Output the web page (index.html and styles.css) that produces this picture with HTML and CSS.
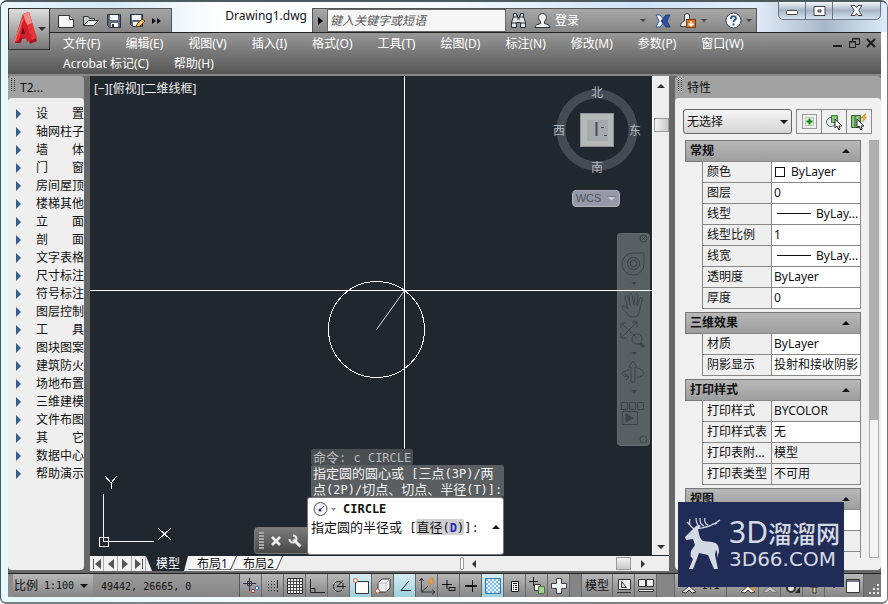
FILE: index.html
```html
<!DOCTYPE html>
<html lang="zh-CN">
<head>
<meta charset="utf-8">
<title>Drawing1.dwg</title>
<link rel="stylesheet" href="styles.css">
</head>
<body>
<div class="window">
  <header class="titlebar">
    <div class="quick">
      <button aria-label="新建"><svg width="18" height="16" viewBox="0 0 18 16"><path d="M1.500 2.500h11l4 4v8h-15z" fill="#f4f5f7" stroke="#333"/><path d="M12.500 2.500v4h4" fill="#ccd" stroke="#333"/></svg></button>
      <button aria-label="打开"><svg width="18" height="16" viewBox="0 0 18 16"><path d="M1.500 12V3.500h5l1 2h5v2" fill="#c9ccd0" stroke="#333"/><path d="M1.500 12.500l5-5h10l-5 5z" fill="#eef0f2" stroke="#333"/></svg></button>
      <button aria-label="保存"><svg width="16" height="16" viewBox="0 0 16 16"><path d="M1.500 1.500h13v13h-11l-2-2z" fill="#5e6a7c" stroke="#27303c"/><path d="M4 2h8v5H4zM5 10h7v4H5z" fill="#f5f6f8"/><path d="M6 11h2v3H6z" fill="#333"/></svg></button>
      <button aria-label="另存为"><svg width="17" height="16" viewBox="0 0 17 16"><path d="M1.500 1.500h12v12h-10l-2-2z" fill="#5e6a7c" stroke="#27303c"/><path d="M3 2h9v5H3zM4 9h6v4H4z" fill="#f5f6f8"/><path d="M7 14l1-3 5-5 3 2-5 5z" fill="#f5c56a" stroke="#6b3c0c"/></svg></button>
      <button aria-label="更多"><svg width="9" height="8" viewBox="0 0 9 8"><path d="M0 1l4 3-4 3zM5 1l4 3-4 3z" fill="#111"/></svg></button>
    </div>
    <h1 class="title">Drawing1.dwg</h1>
    <div class="infocenter">
      <button class="expand" aria-label="展开"><svg width="5" height="8" viewBox="0 0 5 8"><path d="M0 0l5 4-5 4z" fill="#000"/></svg></button>
      <input class="search" type="text" aria-label="搜索" placeholder="键入关键字或短语">
      <button class="find" aria-label="查找"><svg width="17" height="17" viewBox="0 0 17 17"><path d="M3.500 1.500h3v2h1v2h2v-2h1v-2h3v3l2 6v5h-5v-5h-4v5h-5v-5l2-6z" fill="#dfe3e8" stroke="#262b31"/><path d="M1 11h5M11 11h5M7 7h3M3 5h4M10 5h4" stroke="#262b31"/></svg></button>
      <button class="login"><svg width="17" height="17" viewBox="0 0 17 17"><path d="M1 15.500c0-3 3-3 5.500-4v-2C3 6 4.500 1.500 8.500 1.500S14 6 10.500 9.500v2c2.500 1 5.500 1 5.500 4z" fill="#eef0f2" stroke="#2c3035"/></svg>登录</button>
      <span class="caret caret-login"></span>
      <button aria-label="Exchange"><svg width="16" height="14" viewBox="0 0 16 14"><path d="M1 1h4l5 6-5 6H1l3-6z" fill="#eef3fa" stroke="#3a5a92"/><path d="M15 1h-4L6 7l5 6h4l-3-6z" fill="#2c519b" stroke="#24427f"/></svg></button>
      <button class="update" aria-label="更新"><svg width="18" height="17" viewBox="0 0 18 17"><path d="M1.500 14.500c0-3 2-5 4-6V4a2.500 2.500 0 0 1 5 0v4l5 5v1.500z" fill="#e9edf2" stroke="#3b4148"/><rect x="7.500" y="7.500" width="9" height="8" fill="#d87820" stroke="#7c3808"/><path d="M12 9v5M9.500 11.500L12 14l2.500-2.500" stroke="#fff" fill="none" stroke-width="1.500"/></svg></button>
      <span class="caret"></span>
      <button class="help" aria-label="帮助"><svg width="17" height="17" viewBox="0 0 17 17"><circle cx="8.500" cy="8.500" r="7.500" fill="#f6f9fd" stroke="#38404c"/><path d="M6 7c0-4 5-3.500 5-.7C11 8 8.500 8 8.500 10M8.500 11.500v2" fill="none" stroke="#2d509c" stroke-width="1.900"/></svg></button>
      <span class="caret"></span>
    </div>
    <div class="winctl">
      <button aria-label="最小化"><svg width="13" height="6" viewBox="0 0 13 6"><rect x=".5" y=".5" width="11" height="4" rx="1" fill="#fff" stroke="#444"/></svg></button>
      <button aria-label="最大化"><svg width="13" height="10" viewBox="0 0 13 10"><path d="M1 .5h11v9H1zM5 4h3v2H5z" fill="#fff" fill-rule="evenodd" stroke="#444"/></svg></button>
      <button class="close" aria-label="关闭"><svg width="13" height="11" viewBox="0 0 13 11"><path d="M1 .5h4l1.500 2 1.500-2h4L8.700 5.500l3.300 5H8l-1.500-2-1.500 2H1l3.300-5z" fill="#fff" stroke="#444"/></svg></button>
    </div>
  </header>
  <button class="appbtn" aria-label="应用程序菜单"><svg width="40" height="40" viewBox="0 0 40 40"><path d="M5 34L14 5l6-2 8 29-7 3-2-6-6 1-1 4z" fill="#a81620"/><path d="M5 34L14 5l6-2 8 26-6 2-7-20-5 20z" fill="#e4363a"/><path d="M14 5l6-2 3 11-5 2z" fill="#f48c88"/><path d="M14 19l4 1 2 7h-8z" fill="#5f0c12"/><path d="M13 14l4-1 6 18-5 2zM11 25h11l1 3-12 1z" fill="#cf1f28"/><path d="M5 34L14 10" stroke="#f77" fill="none"/><path d="M29 18h8l-4 4z" fill="#333"/></svg></button>
  <nav class="menubar">
    <div class="menus">
      <button>文件(F)</button><button>编辑(E)</button><button>视图(V)</button><button>插入(I)</button><button>格式(O)</button><button>工具(T)</button><button>绘图(D)</button><button>标注(N)</button><button>修改(M)</button><button>参数(P)</button><button>窗口(W)</button><button>Acrobat 标记(C)</button><button>帮助(H)</button>
    </div>
    <div class="mdi">
      <button aria-label="最小化图形"><svg width="11" height="12" viewBox="0 0 11 12"><path d="M1 8h9v2H1z" fill="#1c1c1c"/></svg></button>
      <button aria-label="还原图形"><svg width="13" height="12" viewBox="0 0 13 12"><path d="M4.500 4V1.500h7v6H8M4 2h8M1.500 4.500h6v6h-6zM1 5h7" fill="none" stroke="#1c1c1c"/></svg></button>
      <button aria-label="关闭图形"><svg width="10" height="12" viewBox="0 0 10 12"><path d="M1 2l8 8M9 2l-8 8" stroke="#1c1c1c" stroke-width="2"/></svg></button>
    </div>
  </nav>

  <main class="main">
    <aside class="palette">
      <h2 class="palhead"><span class="grip"></span>T2...</h2>
      <ul class="tools">
        <li>设　　置</li><li>轴网柱子</li><li>墙　　体</li><li>门　　窗</li><li>房间屋顶</li><li>楼梯其他</li><li>立　　面</li><li>剖　　面</li><li>文字表格</li><li>尺寸标注</li><li>符号标注</li><li>图层控制</li><li>工　　具</li><li>图块图案</li><li>建筑防火</li><li>场地布置</li><li>三维建模</li><li>文件布图</li><li>其　　它</li><li>数据中心</li><li>帮助演示</li>
      </ul>
    </aside>

    <section class="drawing">
      <div class="canvas">
        <p class="viewlabel">[−][俯视][二维线框]</p>
        <svg class="model" width="100%" height="100%">
          <g stroke="#fff" fill="none" shape-rendering="crispEdges">
            <path d="M314.500 0V2000M0 214.500H3000"/>
            <circle cx="286.500" cy="253.500" r="48"/>
          </g>
          <path d="M286.500 253.500l28-39" stroke="#ddd"/>
        </svg>
        <svg class="ucs" width="80" height="76" viewBox="0 0 80 76" fill="none" stroke="#f4f4f4" shape-rendering="crispEdges"><path d="M9.500 67V20M9 67.500h51M5.500 63.500h9v9h-9zM11 2l6 7 6-7M17.500 9v6M64 54l13 12M77 54L64 66"/></svg>
        <div class="compass">
          <svg width="82" height="82" viewBox="0 0 82 82"><circle cx="41" cy="41" r="36" fill="none" stroke="#444b55" stroke-width="9"/><rect x="24.500" y="24.500" width="33" height="33" fill="#b4b8b9" stroke="#8e9294"/><rect x="31" y="31" width="21" height="21" fill="#a5aaad"/><path d="M40.500 33v14" stroke="#454b52" stroke-width="2"/><path d="M45 38.500h3M48 46.500h3" stroke="#454b52"/></svg>
          <span class="n">北</span><span class="w">西</span><span class="e">东</span><span class="s">南</span>
        </div>
        <button class="wcs">WCS<svg width="9" height="5" viewBox="0 0 9 5"><path d="M0 .5h9l-4.500 4z" fill="#c9ccd6"/><path d="M0 .5h9" stroke="#777b88"/></svg></button>
        <svg class="navbar" width="33" height="213" viewBox="0 0 33 213" fill="none" stroke="#3c444a">
          <rect x=".5" y=".5" width="32" height="212" rx="3" fill="#596063" stroke="#666d70"/>
          <circle cx="26.500" cy="5.500" r="3.500"/><path d="M25 4l3 3M28 4l-3 3"/>
          <path d="M27 20v11a11 11 0 1 1-11-11z"/><circle cx="16.500" cy="30.500" r="6"/><circle cx="16.500" cy="30.500" r="3.500"/>
          <path d="M14 49h6l-3 3zM14 119h6l-3 3zM14 157h6l-3 3z" fill="#3c444a" stroke="none"/>
          <path d="M11 82c-3-5-8-7-5-9 2-1 4 2 5 3L8 65c0-3 2-3 3-1l2 8-1-10c1-2 3-2 3 0l2 10 1-10c1-2 3-1 3 1l-1 10 3-8c2-1 3 0 2 2l-3 13c-1 3-3 4-5 4-3 0-5-1-6-2z"/>
          <path d="M5 91l15 14M19 90L5 104M4 95v-5h5M15 89h5v5M4 100v5h5"/><circle cx="20" cy="106" r="5"/><path d="M23 110l4 4" stroke-width="3"/>
          <path d="M14 149v-15h-2l4-6 4 6h-2v15zM12 137c-9 2-9 6 0 7M8 141l4 3-3 3M20 135c9 2 9 9 0 9"/>
          <path d="M4.500 169.500h6v7h-6zM12.500 169.500h6v7h-6zM20.500 169.500h6v7h-6zM5.500 178.500h15v13h-15z"/><path d="M9 181l7 4-7 4z" fill="#3c444a"/><circle cx="26.500" cy="206.500" r="3.500"/>
        </svg>
        <svg class="model" width="100%" height="100%" shape-rendering="crispEdges"><path d="M500 214.500H3000" stroke="#fff"/></svg>
        <div class="command">
          <div class="cmdbar">
            <span class="cmdgrip"></span>
            <button aria-label="关闭命令行"><svg width="10" height="10" viewBox="0 0 10 10"><path d="M1 1l8 8M9 1L1 9" stroke="#eee" stroke-width="2.500"/></svg></button>
            <button aria-label="自定义"><svg width="14" height="14" viewBox="0 0 14 14"><path d="M5.500 5.500l7 7" stroke="#eee" stroke-width="3"/><path d="M5 1.500a3.500 3.500 0 1 1-3.500 3.500" fill="none" stroke="#eee" stroke-width="2"/></svg></button>
          </div>
          <div class="cmdmain">
            <div class="history">
              <p>命令<span class="lat">: c CIRCLE</span></p>
              <p>指定圆的圆心或<span class="lat"> [</span>三点<span class="lat">(3P)/</span>两<br>点<span class="lat">(2P)/</span>切点、切点、半径<span class="lat">(T)]:</span></p>
            </div>
            <div class="prompt">
              <div class="cmdname"><svg width="23" height="16" viewBox="0 0 23 16"><circle cx="7.500" cy="8" r="6.500" fill="#f2f3f6" stroke="#555"/><path d="M7 9l4-4" stroke="#3c4db0"/><circle cx="7" cy="9" r="1.500" fill="#334"/><path d="M18 7h5l-2.500 3z" fill="#888"/></svg><b class="lat">CIRCLE</b></div>
              <div class="cmdline">指定圆的半径或<span class="lat"> [</span><button class="option">直径<span class="lat">(<b>D</b>)</span></button><span class="lat">]:</span><span class="up"></span></div>
            </div>
          </div>
        </div>
      </div>
      <div class="vscroll"><span class="tri up-tri"></span><span class="thumb vthumb"></span><span class="tri down-tri"></span></div>
      <div class="tabs">
        <div class="tabnav">
          <button aria-label="第一个"><svg width="10" height="10" viewBox="0 0 10 10"><path d="M1.500 0v10" stroke="#555"/><path d="M9 0v10L3 5z" fill="#555"/></svg></button>
          <button aria-label="上一个"><svg width="6" height="10" viewBox="0 0 6 10"><path d="M6 0v10L0 5z" fill="#555"/></svg></button>
          <button aria-label="下一个"><svg width="6" height="10" viewBox="0 0 6 10"><path d="M0 0v10l6-5z" fill="#555"/></svg></button>
          <button aria-label="最后一个"><svg width="10" height="10" viewBox="0 0 10 10"><path d="M8.500 0v10" stroke="#555"/><path d="M1 0v10l6-5z" fill="#555"/></svg></button>
        </div>
        <button class="tab active">模型</button><button class="tab">布局1</button><button class="tab">布局2</button>
        <div class="hscroll"><span class="splitter"></span><span class="tri left-tri"></span><span class="thumb hthumb"></span><span class="tri right-tri"></span></div>
      </div>
    </section>

    <aside class="props">
      <h2 class="palhead"><span class="grip"></span>特性</h2>
      <div class="propbody">
        <div class="selrow">
          <select aria-label="选择对象"><option>无选择</option></select>
          <div class="selbtns">
            <button aria-label="切换 PICKADD"><svg width="17" height="17" viewBox="0 0 17 17"><rect x="1.500" y="1.500" width="14" height="14" fill="none" stroke="#444" stroke-dasharray="1 1"/><rect x="4.500" y="4.500" width="8" height="8" fill="#e2efd9" stroke="#8a8" stroke-dasharray="1 1"/><path d="M8.500 5.500v6M5.500 8.500h6" stroke="#14851b" stroke-width="2"/></svg></button>
            <button aria-label="选择对象"><svg width="18" height="17" viewBox="0 0 18 17"><circle cx="6" cy="9" r="4.500" fill="none" stroke="#567"/><path d="M6.500 2.500h6v7h-6z" fill="#8fc27e" stroke="#3c7a39"/><path d="M10 6v9l2-2 2 4 1-1-1-3h3z" fill="#fff" stroke="#222"/></svg></button>
            <button aria-label="快速选择"><svg width="18" height="17" viewBox="0 0 18 17"><path d="M1.500 2.500h9v12h-9z" fill="#8fc27e" stroke="#33652f"/><path d="M5 3v11" stroke="#33652f"/><path d="M15 1l-4 4h2.500l-1 4 4-5H14l2-3z" fill="#f3b04a" stroke="#d98a2e" stroke-width=".7"/><path d="M7 6v9l2-2 2 4 1-1-1-3h3z" fill="#fff" stroke="#222"/></svg></button>
          </div>
        </div>
        <div class="proplist">
          <div class="sections">
            <button class="sec">常规<span class="up"></span></button>
            <table>
              <tr><th>颜色</th><td><span class="swatch"></span>ByLayer</td></tr>
              <tr><th>图层</th><td>0</td></tr>
              <tr><th>线型</th><td><span class="dash"></span>ByLay...</td></tr>
              <tr><th>线型比例</th><td>1</td></tr>
              <tr><th>线宽</th><td><span class="dash"></span>ByLay...</td></tr>
              <tr><th>透明度</th><td>ByLayer</td></tr>
              <tr><th>厚度</th><td>0</td></tr>
            </table>
            <button class="sec">三维效果<span class="up"></span></button>
            <table>
              <tr><th>材质</th><td>ByLayer</td></tr>
              <tr><th>阴影显示</th><td>投射和接收阴影</td></tr>
            </table>
            <button class="sec">打印样式<span class="up"></span></button>
            <table>
              <tr><th>打印样式</th><td class="ro">BYCOLOR</td></tr>
              <tr><th>打印样式表</th><td>无</td></tr>
              <tr><th>打印表附...</th><td class="ro">模型</td></tr>
              <tr><th>打印表类型</th><td class="ro">不可用</td></tr>
            </table>
            <button class="sec">视图<span class="up"></span></button>
            <table class="last">
              <tr><th></th><td></td></tr>
              <tr><th></th><td class="ro"></td></tr>
              <tr class="stub"><th></th><td class="ro"></td></tr>
            </table>
          </div>
          <div class="propscroll"><span></span></div>
        </div>
      </div>
    </aside>
  </main>

  <footer class="status">
    <button class="scale">比例 <span>1:100</span><span class="down"></span></button>
    <output class="coords">49442, 26665, 0</output>
    <div class="toggles">
      <button aria-label="推断约束"><svg width="18" height="18" viewBox="0 0 18 18" fill="none"><path d="M7.500 1v13M1 6.500h13M5.500 4.500h4v4h-4z" stroke="#334"/><path d="M9.500 12.500h3v3h-3z" fill="#fff" stroke="#a44"/><path d="M13.500 9.500h3v3h-3z" fill="#fff" stroke="#36c"/></svg></button>
      <button aria-label="捕捉"><svg width="18" height="18" viewBox="0 0 18 18"><path d="M4 4.500h9M4 7.500h9M4 10.500h9M4 13.500h9" stroke="#222" stroke-dasharray="1 2"/><path d="M13.500 3v8M13.500 13v2" stroke="#222"/></svg></button>
      <button aria-label="栅格"><svg width="18" height="18" viewBox="0 0 18 18"><path d="M1.500 1.500h15v15h-15z" fill="#f5f5f5" stroke="#222"/><path d="M4.500 1v16M7.500 1v16M10.500 1v16M13.500 1v16M1 4.500h16M1 7.500h16M1 10.500h16M1 13.500h16" stroke="#444"/></svg></button>
      <button aria-label="正交"><svg width="18" height="18" viewBox="0 0 18 18" fill="none" stroke="#222"><path d="M2.500 2v13.500H17M3 11.500h4V15"/></svg></button>
      <button aria-label="极轴"><svg width="18" height="18" viewBox="0 0 18 18" fill="none" stroke="#222"><path d="M12 13a5 5 0 1 1 0-7M7 9.500h9M7 9.500l6-6M13 6v6"/></svg></button>
      <button class="on" aria-label="对象捕捉"><svg width="18" height="18" viewBox="0 0 18 18"><path d="M3.500 4.500h13v12h-13z" fill="#fafafa" stroke="#333"/><circle cx="3.500" cy="3.500" r="2" fill="#fff" stroke="#d4622f"/></svg></button>
      <button aria-label="三维对象捕捉"><svg width="18" height="18" viewBox="0 0 18 18"><path d="M4 6l4-4h8v9l-4 4H4z" fill="#eef0f2" stroke="#333"/><path d="M4 6h8v9M12 6l4-4" fill="none" stroke="#bbb"/><circle cx="3.500" cy="14" r="2" fill="#fff" stroke="#d4622f"/></svg></button>
      <button class="on" aria-label="对象追踪"><svg width="18" height="18" viewBox="0 0 18 18"><path d="M13 4L5 13.500h10" fill="none" stroke="#222"/></svg></button>
      <button aria-label="动态 UCS"><svg width="18" height="18" viewBox="0 0 18 18" fill="none" stroke="#333"><path d="M3.500 2v13H17M3.500 15L10 9M1.500 4l2-3 2 3M14 12.500l3 2.500-3 2.500"/><path d="M13 1l-3 5h3l-1 3 4-5h-2l1-3z" fill="#f3a431" stroke="#d08432" stroke-width=".7"/></svg></button>
      <button aria-label="动态输入"><svg width="18" height="18" viewBox="0 0 18 18" fill="none" stroke="#111"><path d="M7 3v9M2 7.500h10M9 10.500h6v3H9z"/></svg></button>
      <button aria-label="线宽"><svg width="18" height="18" viewBox="0 0 18 18" stroke="#111"><path d="M10.500 3v12" stroke-width="1"/><path d="M3 9h12" stroke-width="2"/></svg></button>
      <button class="on" aria-label="透明度"><svg width="18" height="18" viewBox="0 0 18 18"><path d="M1.500 1.500h15v15h-15z" fill="#e4f1fa" stroke="#2e78ad"/><path d="M2 3h14M2 7h14M2 11h14M2 15h14" stroke="#82bce2" stroke-width="2" stroke-dasharray="2 2"/><path d="M4 5h12M4 9h12M4 13h12" stroke="#82bce2" stroke-width="2" stroke-dasharray="2 2"/></svg></button>
      <button aria-label="快捷特性"><svg width="18" height="18" viewBox="0 0 18 18"><path d="M5.500 4.500h7v10h-7z" fill="#fff" stroke="#111"/><path d="M7 6.500h4M7 8.500h1M9 8.500h2M7 10.500h1M9 10.500h2M7 12.500h1M9 12.500h2" stroke="#111"/></svg></button>
      <button aria-label="选择循环"><svg width="18" height="18" viewBox="0 0 18 18"><path d="M5.500 0v9M1 4.500h9" stroke="#222"/><path d="M6.500 7.500h6v6h-6z" fill="#fff" stroke="#333"/><path d="M10.500 9.500h6v7h-6z" fill="#a9d08e" stroke="#3c7a39"/></svg></button>
      <button aria-label="注释监视器"><svg width="18" height="18" viewBox="0 0 18 18"><path d="M6.500 1.500h5v5h5v5h-5v5h-5v-5h-5v-5h5z" fill="#f0f2fa" stroke="#3c4148"/></svg></button>
    </div>
    <span class="sgap"></span>
    <button class="space">模型</button>
    <button class="cell" aria-label="快速查看布局"><svg width="16" height="16" viewBox="0 0 16 16"><path d="M2.500 1.500h12v10h-12z" fill="#eee" stroke="#333"/><path d="M5.500 3.500v6h5zM1 14.500h14" fill="none" stroke="#333"/></svg></button>
    <button class="cell" aria-label="快速查看图形"><svg width="18" height="16" viewBox="0 0 18 16"><path d="M1.500 1.500h7v7h-7zM9.500 1.500h7v7h-7z" fill="#eee" stroke="#333"/><path d="M1.500 11.500h15v2h-15z" fill="#eee" stroke="#333"/></svg></button>
    <span class="sgap wide"></span>
    <button class="annoscale"><svg width="16" height="16" viewBox="0 0 16 16"><path d="M1 14l7-6 7 6-4 1-3-3-3 3z" fill="#eee" stroke="#333"/></svg>1:1</button>
    <div class="tail">
      <button class="cell" aria-label="注释可见性"><svg width="16" height="16" viewBox="0 0 16 16"><path d="M1 14l7-6 7 6-4 1-3-3-3 3z" fill="#eee" stroke="#333"/><path d="M11 8l3 5" stroke="#e08a2c" stroke-width="2"/></svg></button>
      <button class="cell" aria-label="自动缩放"><svg width="16" height="16" viewBox="0 0 16 16"><path d="M1 14l7-6 7 6-4 1-3-3-3 3z" fill="#bbb" stroke="#777"/></svg></button>
      <button class="cell" aria-label="工作空间"><svg width="18" height="16" viewBox="0 0 18 16"><circle cx="8" cy="10" r="4" fill="#ddd" stroke="#333" stroke-width="2"/><path d="M12 15h5v-6z" fill="#222"/></svg></button>
      <button class="cell" aria-label="锁定"><svg width="16" height="16" viewBox="0 0 16 16"><path d="M4 3h8v6H4zM7 9h3v6H7z" fill="#e6d98a" stroke="#333"/></svg></button>
    </div>
    <span class="down"></span>
    <button class="clean" aria-label="全屏显示"><svg width="16" height="16" viewBox="0 0 16 16"><path d="M1.500 1.500h13v13h-13z" fill="#fafafa" stroke="#333"/><path d="M2 3h12" stroke="#778" stroke-width="2"/></svg></button>
    <span class="resize"><svg width="12" height="12" viewBox="0 0 12 12"><path d="M9 0h2v2H9zM5 4h2v2H5zM9 4h2v2H9zM1 8h2v2H1zM5 8h2v2H5zM9 8h2v2H9z" fill="#e8e8e8"/></svg></span>
  </footer>

  <div class="brand">
    <svg width="38" height="54" viewBox="0 0 38 54" fill="#d5d9e4"><path d="M6 15l-5 5 1 3 7-1 2 6-4 6c-1 5 0 6 2 8l-4 10h4l5-13 1-3 9 2 6 14h4l-3-14 1-5c2 3 1 6 1 8l2-6c0-7-2-9-7-10l-9-1c-4-3-4-8-5-12 2-1 3-3 2-4l-4 1z"/><path d="M10 12C5 9 5 6 6 2M7 9L3 5M11 12C22 11 30 8 36 3M16 10c-4-3-4-6-4-9M20 9c-4-2-4-4-4-8M24 8c-3-1-4-4-3-7M28 7c2 0 4 0 5-1" fill="none" stroke="#d5d9e4" stroke-width="1.200"/></svg>
    <div class="brandtext"><strong><span>3D</span>溜溜网</strong><small>3D66.COM</small></div>
  </div>
</div>
</body>
</html>
```
FILE: styles.css
```css
* { box-sizing: border-box; }
body { margin: 0; background: #fff; }
body, button, input, select { font: 12px/18px "Noto Sans", "Noto Sans CJK SC", sans-serif; color: #111; }
button { background: none; border: 0; padding: 0; margin: 0; display: flex; align-items: center; justify-content: center; white-space: nowrap; }
svg { display: block; flex: none; }
h1, h2, p, ul { margin: 0; padding: 0; font-size: 12px; font-weight: normal; }

.window { position: relative; min-height: 100vh; display: flex; flex-direction: column; padding: 0 6px 5px 7px; border: 1px solid #4c5a5f; border-top-width: 2px; border-right-color: #777; border-bottom: 2px solid #7b8385; border-radius: 7px 7px 6px 6px; background: linear-gradient(90deg, #e4fafc, #f2fdfd 30%, #fff 70%); overflow: hidden; }

/* title bar */
.titlebar { display: flex; height: 30px; padding-top: 6px; background: linear-gradient(90deg, #eaf7fc 0, #d5e9f7 12%, #fff 25%, #f4faff 50%, #cfe2f6 72%, #e2effb 85%, #a9b8c8 93%, #dcebf8); margin: 0 -6px 0 -7px; padding-left: 48px; padding-right: 6px; }
.quick { flex: none; width: 123px; height: 24px; padding: 0 10px 0 7px; display: flex; justify-content: space-between; align-items: center; background: linear-gradient(#a5a5a5, #858585); border: 1px solid #555; border-bottom: 0; }
.title { margin: -2px 5px 0 auto; line-height: 20px; }
.infocenter { flex: none; width: 445px; display: flex; align-items: center; border: 1px solid #555; border-bottom: 0; background: linear-gradient(#a8a8a8, #858585); }
.expand { width: 14px; height: 100%; }
.search { width: 179px; height: 23px; padding: 0 2px; border: 1px solid #666; background: #f6f6f6; font-style: italic; border-radius: 0; }
.search::placeholder { color: #555; opacity: 1; }
.find { margin-left: 4px; }
.login { color: #fff; gap: 4px; margin-left: 7px; }
.caret { margin: 0 4px; border: 3px solid transparent; border-top-color: #444; border-bottom: 0; }
.caret-login { margin: 0 9px 0 auto; }
.update { margin-left: 8px; }
.help { margin-left: 14px; }
.winctl { display: flex; flex: none; align-items: stretch; height: 19px; margin: -7px 0 0 21px; border: 1px solid #6a7580; border-radius: 0 0 5px 5px; background: linear-gradient(#f4f8fc, #a5b4c4 50%, #d4e4f2); }
.winctl button { width: 27px; border-right: 1px solid #6a7580; }
.winctl button.close { width: 47px; border: 0; }
.winctl button:first-child { padding-top: 4px; }
.appbtn { position: absolute; left: 7px; top: 6px; width: 42px; height: 42px; border: 1px solid #333; background: linear-gradient(#dedede, #777); }

/* menus */
.menubar { display: flex; justify-content: space-between; min-height: 43px; padding: 1px 5px 0 55px; background: linear-gradient(#979797, #555); border-top: 1px solid #222; border-bottom: 2px solid #888; }
.menus { display: flex; flex-wrap: wrap; column-gap: 25px; align-content: flex-start; max-width: 760px; }
.menus button { color: #fff; line-height: 20px; }
.mdi { display: flex; gap: 5px; height: 17px; }

/* work area */
.main { flex: 1; display: grid; grid-template-columns: 76px minmax(0, 1fr) 206px; column-gap: 6px; background: #686868; }
.palhead { height: 22px; display: flex; align-items: center; gap: 5px; padding: 2px 0 0 3px; border-radius: 4px 4px 0 0; background: #a2a2a2; line-height: 20px; }
.grip { width: 4px; height: 13px; margin-bottom: 8px; background: repeating-linear-gradient(#222 0 1px, transparent 1px 2px); -webkit-mask: linear-gradient(90deg, #000 1px, transparent 1px 3px, #000 3px); mask: linear-gradient(90deg, #000 1px, transparent 1px 3px, #000 3px); }
.palette, .props { display: flex; flex-direction: column; background: #a2a2a2; border-radius: 4px; overflow: hidden; margin-bottom: 3px; }
.tools { flex: 1; list-style: none; padding: 7px 0 0 8px; background: #efefef; border-radius: 4px 4px 3px 3px; }
.tools li { display: flex; align-items: center; gap: 15px; white-space: pre; color: #111; }
.tools li::before { content: ""; border: 5px solid transparent; border-left-color: #356089; border-right: 0; }

.drawing { display: grid; grid-template-columns: minmax(0, 1fr) 17px; grid-template-rows: 1fr 16px; margin-bottom: 2px; }
.canvas { position: relative; background: #20272f; overflow: hidden; }
.viewlabel { position: absolute; left: 4px; top: 4px; color: #eee; }
.model { position: absolute; inset: 0; }
.ucs { position: absolute; left: 4px; bottom: 5px; }
.compass { position: absolute; right: 14px; top: 13px; width: 82px; height: 82px; color: #b5b8ba; }
.compass span { position: absolute; line-height: 14px; }
.n { left: 35px; top: -3px; } .s { left: 35px; bottom: -4px; }
.w { left: -3px; top: 35px; } .e { right: -3px; top: 35px; }
.wcs { position: absolute; right: 32px; top: 114px; width: 48px; height: 17px; gap: 6px; border: 1px solid #b0b3be; border-radius: 4px; background: #9599a7; color: #50545f; font: 11px/15px "Liberation Sans", sans-serif; }
.navbar { position: absolute; right: 2px; top: 157px; }

.command { position: absolute; left: 164px; bottom: 1px; display: flex; align-items: flex-end; font: 13px/16px "Noto Sans CJK SC", sans-serif; }
.lat { font-family: "DejaVu Sans Mono", monospace; font-size: 12px; line-height: 0; white-space: pre; }
.cmdbar { width: 54px; height: 27px; display: flex; align-items: center; gap: 7px; padding-left: 4px; border-radius: 4px 0 0 4px; border: 1px solid #777; border-right: 0; background: linear-gradient(#7c7c7c, #474747); }
.cmdgrip { width: 5px; height: 17px; background: repeating-linear-gradient(#aaa 0 2px, #555 2px 3px); }
.history { padding-left: 3px; display: flex; flex-direction: column; align-items: flex-start; color: #f2f2f2; }
.history p { font-size: 13px; line-height: 16px; padding: 0 2px; background: #5a5e61; border-radius: 2px; white-space: nowrap; }
.history p:first-child { color: #b9bbbd; background: #494e53; }
.prompt { width: 195px; height: 56px; margin-top: 1px; padding: 2px 3px; background: #fff; border-radius: 2px; box-shadow: 0 0 0 1px #777; }
.cmdname { display: flex; align-items: center; gap: 7px; height: 18px; padding-left: 2px; }
.cmdline { display: flex; align-items: baseline; line-height: 18px; white-space: nowrap; }
.option { font: inherit; line-height: 16px; align-items: baseline; background: #cfcfcf; border-radius: 2px; }
.option b { color: #2a22c8; }
.up, .down { border: 4px solid transparent; border-bottom-color: #111; border-top: 0; margin-left: auto; }
.cmdline .up { align-self: center; }
.down { border: 4px solid transparent; border-top-color: #111; border-bottom: 0; }

.vscroll { background: #eee; display: flex; flex-direction: column; align-items: center; border-left: 1px solid #fff; }
.tri { border: 4px solid transparent; }
.up-tri { border-bottom-color: #333; margin-top: 4px; }
.down-tri { border-top-color: #333; margin: auto 0 2px; }
.left-tri { border-right-color: #333; margin-left: 4px; }
.right-tri { border-left-color: #333; margin: 0 20px 0 10px; }
.thumb { width: 15px; height: 14px; border: 1px solid #999; background: linear-gradient(90deg, #f4f4f4, #c8c8c8); }
.vthumb { margin-top: 30px; }
.hthumb { margin-left: auto; height: 13px; background: linear-gradient(#f4f4f4, #c8c8c8); }
.tabs { grid-column: 1 / -1; display: flex; background: #eee; border-top: 1px solid #20272f; overflow: hidden; }
.tabnav { display: flex; }
.tabnav button { width: 14px; border-right: 1px solid #aaa; background: #f1f1f1; }
.tab { position: relative; z-index: 0; height: 15px; padding: 1px 6px 0; margin-left: 3px; line-height: 14px; }
.tab::before { content: ""; position: absolute; z-index: -1; inset: 0 0 1px 0; background: #f8f8f8; border-right: 1px solid #444; border-bottom: 1px solid #777; transform: skewX(-24deg); }
.tab.active { color: #fff; padding: 1px 8px 0 10px; margin: 0; }
.tab.active::before { background: #20272f; border: 0; inset: 0; transform: none; clip-path: polygon(0 0, 100% 0, 38px 100%, 6px 100%); }
.hscroll { flex: 1; max-width: 209px; display: flex; align-items: center; margin-left: auto; }
.splitter { width: 4px; height: 13px; border: 1px solid #999; border-radius: 2px; background: #fff; }

/* properties */
.propbody { flex: 1; display: flex; flex-direction: column; padding: 11px 2px 12px 8px; border-radius: 4px; background: #f0f0f0; }
.selrow { position: relative; display: flex; gap: 4px; height: 25px; margin-bottom: 6px; }
select { width: 109px; height: 25px; appearance: none; padding: 0 3px; border: 1px solid #666; border-radius: 3px; background: linear-gradient(#f5f5f5, #d5d5d5); }
.selrow::after { content: ""; position: absolute; left: 97px; top: 11px; border: 4px solid transparent; border-top-color: #111; border-bottom: 0; pointer-events: none; }
.selbtns { display: flex; border: 1px solid #888; }
.selbtns button { width: 25px; border-right: 1px solid #888; }
.selbtns button:last-child { border: 0; width: 24px; }
.proplist { flex: 1; display: flex; justify-content: space-between; }
.sections { width: 176px; margin-left: 2px; }
.sec { width: 100%; height: 22px; justify-content: flex-start; padding: 0 10px 0 4px; font-weight: bold; border: 1px solid #777; background: linear-gradient(#b8b8b8, #9e9e9e); }
table { width: 159px; margin: -1px 0 3px 17px; border-collapse: collapse; table-layout: fixed; }
tr { height: 21px; }
th, td { height: 21px; padding: 0 0 0 4px; border: 1px solid #888; font-weight: normal; text-align: left; line-height: 18px; white-space: nowrap; overflow: hidden; }
th { width: 69px; background: #efefef; }
td { padding-left: 2px; background: #fff; }
td.ro { background: #efefef; }
table.last { margin-bottom: 0; }
.stub, .stub th, .stub td { height: 6px; padding: 0; border-bottom: 0; }
.swatch { display: inline-block; width: 10px; height: 10px; margin: 0 6px 0 1px; border: 1px solid #111; vertical-align: -1px; }
.dash { display: inline-block; width: 34px; height: 1px; margin: 0 5px 4px 3px; background: #111; }
.propscroll { width: 10px; background: #f4f4f4; border: 1px solid #aaa; }
.propscroll span { display: block; height: 67%; background: #b0b0b0; }

/* status bar */
.status { display: flex; align-items: stretch; height: 24px; border-top: 1px solid #222; background: linear-gradient(#b8b8b8, #858585); }
.scale { width: 85px; padding: 0 5px 0 1px; gap: 6px; border-left: 5px solid #8c8c8c; }
.scale span:first-child { font: 10px/18px "DejaVu Sans Mono", monospace; }
.coords { width: 147px; padding: 4px 0 0 8px; font: 10px/18px "DejaVu Sans Mono", monospace; color: #111; background: linear-gradient(#9a9a9a, #858585); border-right: 1px solid #555; white-space: nowrap; }
.toggles, .tail { display: flex; }
.toggles button, .cell { width: 22px; border-right: 1px solid #666; }
.toggles .on { background: linear-gradient(#d8ecf2, #9ed0df); }
.sgap { width: 12px; background: #858585; border-right: 1px solid #666; }
.sgap.wide { width: 18px; }
.space { width: 31px; border-right: 1px solid #666; }
.annoscale { width: 52px; gap: 4px; border-right: 1px solid #666; font: 10px/18px "DejaVu Sans Mono", monospace; }
.tail { margin-left: auto; }
.status > .down { align-self: center; margin: 0 5px; }
.clean { width: 20px; }
.resize { width: 18px; padding: 10px 0 0 4px; background: #777; border-left: 1px solid #666; }

.brand { position: absolute; right: 43px; bottom: 15px; width: 166px; height: 85px; display: flex; align-items: center; gap: 7px; padding: 0 0 2px 6px; background: #202c55; color: #d5d9e4; }
.brandtext { display: flex; flex-direction: column; }
.brand strong { display: flex; align-items: baseline; font: 24px/30px "Noto Sans CJK SC", sans-serif; font-weight: 500; white-space: nowrap; }
.brand strong span { font: 30px/30px "Noto Sans", sans-serif; }
.brand small { font: 20px/22px "DejaVu Sans", sans-serif; }
```
